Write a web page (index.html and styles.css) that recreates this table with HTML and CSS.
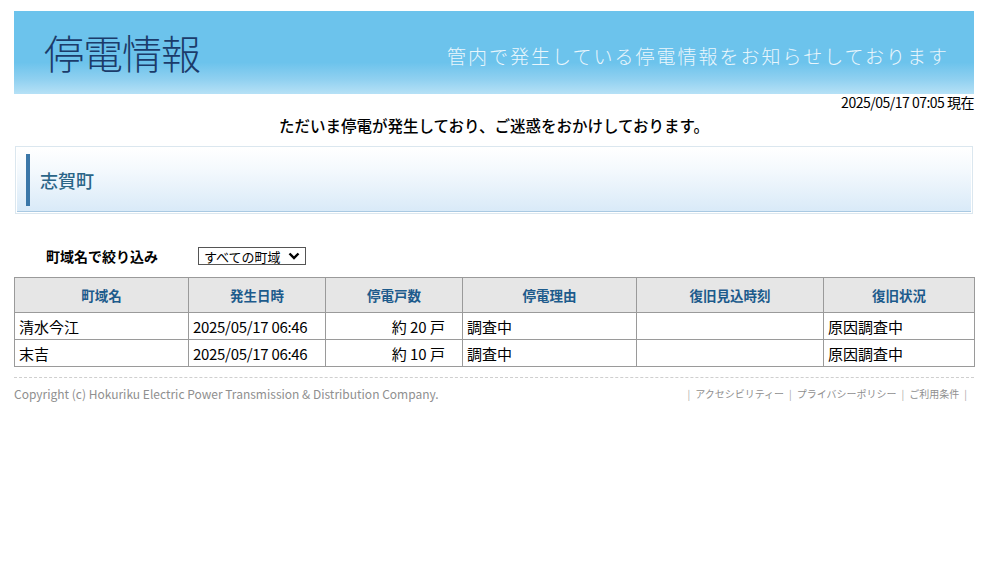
FILE: index.html
```html
<!DOCTYPE html>
<html lang="ja">
<head>
<meta charset="utf-8">
<title>停電情報</title>
<link rel="stylesheet" href="styles.css">
</head>
<body>
<div class="wrap">
  <header class="banner">
    <h1 class="title">停電情報</h1>
    <p class="tagline">管内で発生している停電情報をお知らせしております</p>
  </header>
  <div class="stamp">2025/05/17 07:05 現在</div>
  <p class="notice">ただいま停電が発生しており、ご迷惑をおかけしております。</p>
  <div class="area-box">
    <div class="area-inner">
      <h2 class="area-name">志賀町</h2>
    </div>
  </div>
  <div class="filter">
    <span class="filter-label">町域名で絞り込み</span>
    <span class="select">すべての町域 <svg class="chev" width="12" height="8" viewBox="0 0 12 8"><path d="M1.5 1.5 L6 6 L10.5 1.5" fill="none" stroke="#000" stroke-width="2.4"/></svg></span>
  </div>
  <table class="grid">
    <colgroup>
      <col class="c1"><col class="c2"><col class="c3"><col class="c4"><col class="c5"><col class="c6">
    </colgroup>
    <thead>
      <tr><th>町域名</th><th>発生日時</th><th>停電戸数</th><th>停電理由</th><th>復旧見込時刻</th><th>復旧状況</th></tr>
    </thead>
    <tbody>
      <tr><td>清水今江</td><td class="num">2025/05/17 06:46</td><td class="cnt">約 20 戸</td><td>調査中</td><td></td><td>原因調査中</td></tr>
      <tr><td>末吉</td><td class="num">2025/05/17 06:46</td><td class="cnt">約 10 戸</td><td>調査中</td><td></td><td>原因調査中</td></tr>
    </tbody>
  </table>
  <footer class="foot">
    <span class="copy">Copyright (c) Hokuriku Electric Power Transmission &amp; Distribution Company.</span>
    <span class="links"><span class="sep">|</span>アクセシビリティー<span class="sep">|</span>プライバシーポリシー<span class="sep">|</span>ご利用条件<span class="sep">|</span></span>
  </footer>
</div>
</body>
</html>
```
FILE: styles.css
```css
html, body { margin: 0; padding: 0; background: #fff; }
body { font-family: "Noto Sans CJK JP", "Noto Sans", sans-serif; color: #000; }
.wrap { width: 960px; margin: 0 0 0 14px; padding-top: 11px; }

.banner {
  height: 83px;
  display: flex;
  align-items: center;
  justify-content: space-between;
  background: linear-gradient(to bottom, #6cc3ec 0%, #6cc3ec 62%, #8fd0f0 82%, #b6e1f6 100%);
  padding: 0 25px 0 30px;
  box-sizing: border-box;
}
.title {
  margin: 0;
  font-size: 40px;
  font-weight: 300;
  color: #1b3b6a;
  letter-spacing: -1px;
  line-height: 1;
  margin-top: -2px;
}
.tagline {
  margin: 0;
  font-size: 19px;
  font-weight: 300;
  letter-spacing: 2px;
  color: #eaf6fc;
  line-height: 1;
  margin-top: 6px;
}

.stamp { text-align: right; font-size: 14px; line-height: 16px; letter-spacing: -0.5px; }
.notice {
  margin: 5px 0 0;
  text-align: center;
  font-size: 15.5px;
  font-weight: 500;
  line-height: 20px;
}

.area-box {
  margin: 11px 0 0 1px;
  width: 958px;
  border: 1px solid #dbe7ef;
  padding: 1px;
  box-sizing: border-box;
}
.area-inner {
  height: 63px;
  background: linear-gradient(to bottom, #ffffff 0%, #f4f9fd 35%, #d9eaf8 100%);
  border-bottom: 1px solid #a9c9e2;
  display: flex;
  align-items: center;
  padding-left: 9px;
}
.area-name {
  margin: 0;
  font-size: 18px;
  font-weight: 500;
  color: #2a6588;
  border-left: 4px solid #3b77a8;
  height: 52px;
  line-height: 52px;
  padding-left: 10px;
}

.filter {
  display: flex;
  align-items: center;
  margin-top: 33px;
  padding-left: 32px;
  height: 18px;
}
.filter-label { font-size: 14px; font-weight: 700; width: 152px; }
.select {
  display: inline-flex;
  align-items: center;
  height: 18px;
  box-sizing: border-box;
  border: 1px solid #555;
  font-size: 13px;
  padding: 0 5px 0 5px;
  gap: 7px;
  line-height: 1;
}
.chev { display: block; }

.grid {
  margin-top: 12px;
  width: 960px;
  border-collapse: collapse;
  table-layout: fixed;
}
.c1 { width: 174px; } .c2 { width: 137px; } .c3 { width: 137px; }
.c4 { width: 174px; } .c5 { width: 187px; } .c6 { width: 151px; }
.grid th, .grid td { border: 1px solid #9a9a9a; }
.grid th {
  height: 34px;
  background: #e6e6e6;
  color: #1d5b8c;
  font-size: 13.5px;
  font-weight: 700;
  text-align: center;
  padding: 0;
}
.grid td {
  height: 26px;
  font-size: 15px;
  padding: 0 0 0 4px;
  line-height: 1;
  white-space: nowrap;
}
.grid td.num { font-size: 15px; letter-spacing: -0.3px; }
.grid td.cnt { text-align: right; padding-right: 17px; }

.foot {
  margin-top: 10px;
  border-top: 1px dashed #cfcfcf;
  display: flex;
  justify-content: space-between;
  align-items: center;
  height: 30px;
  font-size: 12px;
  color: #8f8f8f;
}
.links { padding-right: 2px; font-size: 10px; }
.sep { margin: 0 5px; color: #aaa; }
```
